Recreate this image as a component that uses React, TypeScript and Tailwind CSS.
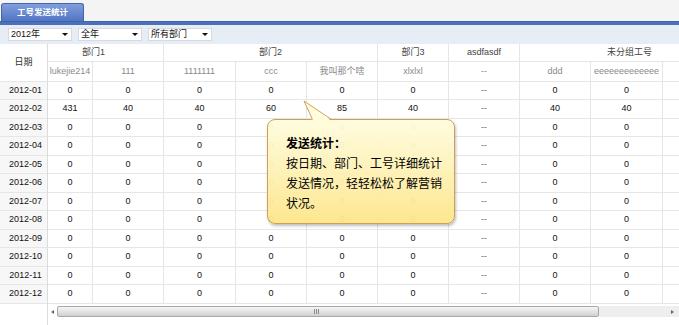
import React from "react";

const colW = [
  "w-[45px]",
  "w-[71px]",
  "w-[72px]",
  "w-[71px]",
  "w-[71px]",
  "w-[71px]",
  "w-[71px]",
  "w-[71px]",
  "w-[72px]",
];

const names = [
  "lukejie214",
  "111",
  "1111111",
  "ccc",
  "我叫那个啥",
  "xlxlxl",
  "--",
  "ddd",
  "eeeeeeeeeeeee",
];

const months = ["01", "02", "03", "04", "05", "06", "07", "08", "09", "10", "11", "12"];
const rowH = ["h-[18px]", "h-[19px]"];

function rowValues(m: string) {
  if (m === "02") return ["431", "40", "40", "60", "85", "40", "--", "40", "40"];
  return ["0", "0", "0", "0", "0", "0", "--", "0", "0"];
}

function SelectBox({ label }: { label: string }) {
  return (
    <div className="w-[64px] h-[13px] bg-white border border-[#d6dbe3] flex items-center justify-between pl-[2px] pr-[3px]">
      <span className="text-[9px] leading-none text-[#111]">{label}</span>
      <span className="w-0 h-0 border-l-[3px] border-r-[3px] border-t-[3px] border-l-transparent border-r-transparent border-t-[#111]" />
    </div>
  );
}

export default function App() {
  return (
    <div className="w-[679px] h-[325px] bg-white overflow-hidden relative font-['Liberation_Sans','Noto_Sans_CJK_SC',sans-serif]">
      {/* tab strip */}
      <div className="h-[21px] bg-[#f4f4f4] flex items-end pl-[1px]">
        <div className="w-[83px] h-[18px] rounded-t-[3px] border border-b-0 border-[#4466a8] bg-gradient-to-b from-[#809fdd] to-[#5275c2] flex items-center justify-center">
          <span className="text-[8.5px] font-bold text-white leading-none">工号发送统计</span>
        </div>
      </div>
      <div className="h-[4px] bg-[#4c70bc] border-t border-[#3f62ad]" />

      {/* toolbar */}
      <div className="h-[19px] bg-[#e7edf5] flex items-center gap-[6px] pl-[8px]">
        <SelectBox label="2012年" />
        <SelectBox label="全年" />
        <SelectBox label="所有部门" />
      </div>

      {/* grid */}
      <div className="flex h-[281px]">
        {/* locked date column */}
        <div className="w-[48px] border-r border-[#dcdcdc] flex flex-col">
          <div className="h-[38px] border-b border-[#e6e6e6] flex items-center justify-center text-[9px] text-[#333]">
            日期
          </div>
          {months.map((m, i) => (
            <div
              key={m}
              className={`${rowH[i % 2]} border-b border-[#e6e6e6] bg-[#f7f7f7] flex items-center justify-center pl-[4px] text-[9px] text-[#111]`}
            >
              2012-{m}
            </div>
          ))}
        </div>

        {/* scrolling part */}
        <div className="w-[631px] flex flex-col">
          <div className="h-[18px] flex border-b border-[#e6e6e6] text-[9px] text-[#444]">
            <div className="w-[116px] border-r border-[#e6e6e6] flex items-center pl-[34px]">部门1</div>
            <div className="w-[214px] border-r border-[#e6e6e6] flex items-center justify-center">部门2</div>
            <div className="w-[71px] border-r border-[#e6e6e6] flex items-center justify-center">部门3</div>
            <div className="w-[71px] border-r border-[#e6e6e6] flex items-center justify-center">asdfasdf</div>
            <div className="flex-1 flex items-center pl-[87px] whitespace-nowrap">未分组工号</div>
          </div>
          <div className="h-[20px] flex border-b border-[#e6e6e6] text-[9px] text-[#8a8a8a]">
            {names.map((n, i) => (
              <div
                key={i}
                className={`${colW[i]} border-r border-[#e6e6e6] flex items-center justify-center whitespace-nowrap overflow-hidden`}
              >
                {n}
              </div>
            ))}
            <div className="flex-1" />
          </div>
          {months.map((m, r) => (
            <div key={m} className={`${rowH[r % 2]} flex border-b border-[#e6e6e6] text-[9px] text-[#111]`}>
              {rowValues(m).map((v, i) => (
                <div
                  key={i}
                  className={`${colW[i]} border-r border-[#e6e6e6] flex items-center justify-center ${v === "--" ? "text-[#666]" : ""}`}
                >
                  {v}
                </div>
              ))}
              <div className="flex-1" />
            </div>
          ))}

          {/* horizontal scrollbar */}
          <div className="mt-[2px] h-[11px] flex items-stretch">
            <div className="w-[9px] flex items-center justify-center">
              <span className="w-0 h-0 border-t-[2.5px] border-b-[2.5px] border-r-[3px] border-t-transparent border-b-transparent border-r-[#666]" />
            </div>
            <div className="w-[542px] rounded-[2px] border border-[#a8a8a8] bg-gradient-to-b from-[#f6f6f6] via-[#e4e4e4] to-[#cfcfcf] flex items-center pl-[256px]">
              <div className="flex gap-[1px]">
                <span className="w-[1px] h-[5px] bg-[#8a8a8a]" />
                <span className="w-[1px] h-[5px] bg-[#8a8a8a]" />
                <span className="w-[1px] h-[5px] bg-[#8a8a8a]" />
              </div>
            </div>
            <div className="w-[66px] bg-[#eeeeee]" />
            <div className="flex-1 bg-[#eeeeee] flex items-center justify-center">
              <span className="w-0 h-0 border-t-[2.5px] border-b-[2.5px] border-l-[3px] border-t-transparent border-b-transparent border-l-[#666]" />
            </div>
          </div>
        </div>
      </div>

      {/* callout overlay */}
      <div className="absolute left-[267px] top-[119px] w-[188px] h-[105px] rounded-[8px] border border-[#cf9f55] bg-gradient-to-b from-[#fffcdef5] to-[#fde68af5] shadow-[1px_2px_3px_rgba(0,0,0,0.25)] pl-[18px] pt-[13px] font-['Noto_Sans_CJK_SC',sans-serif] text-[12px] leading-[20px] text-black">
        <div className="font-bold">发送统计：</div>
        <div>按日期、部门、工号详细统计</div>
        <div>发送情况，轻轻松松了解营销</div>
        <div>状况。</div>
      </div>
      <svg className="absolute left-[300px] top-[100px]" width="36" height="22" viewBox="0 0 36 22">
        <polygon points="12.5,21 4,1 31.5,21" fill="#fffcde" />
        <path d="M12.5 19.5 L4 1 L31.5 19.5" fill="none" stroke="#cf9f55" strokeWidth="1" />
      </svg>
    </div>
  );
}
